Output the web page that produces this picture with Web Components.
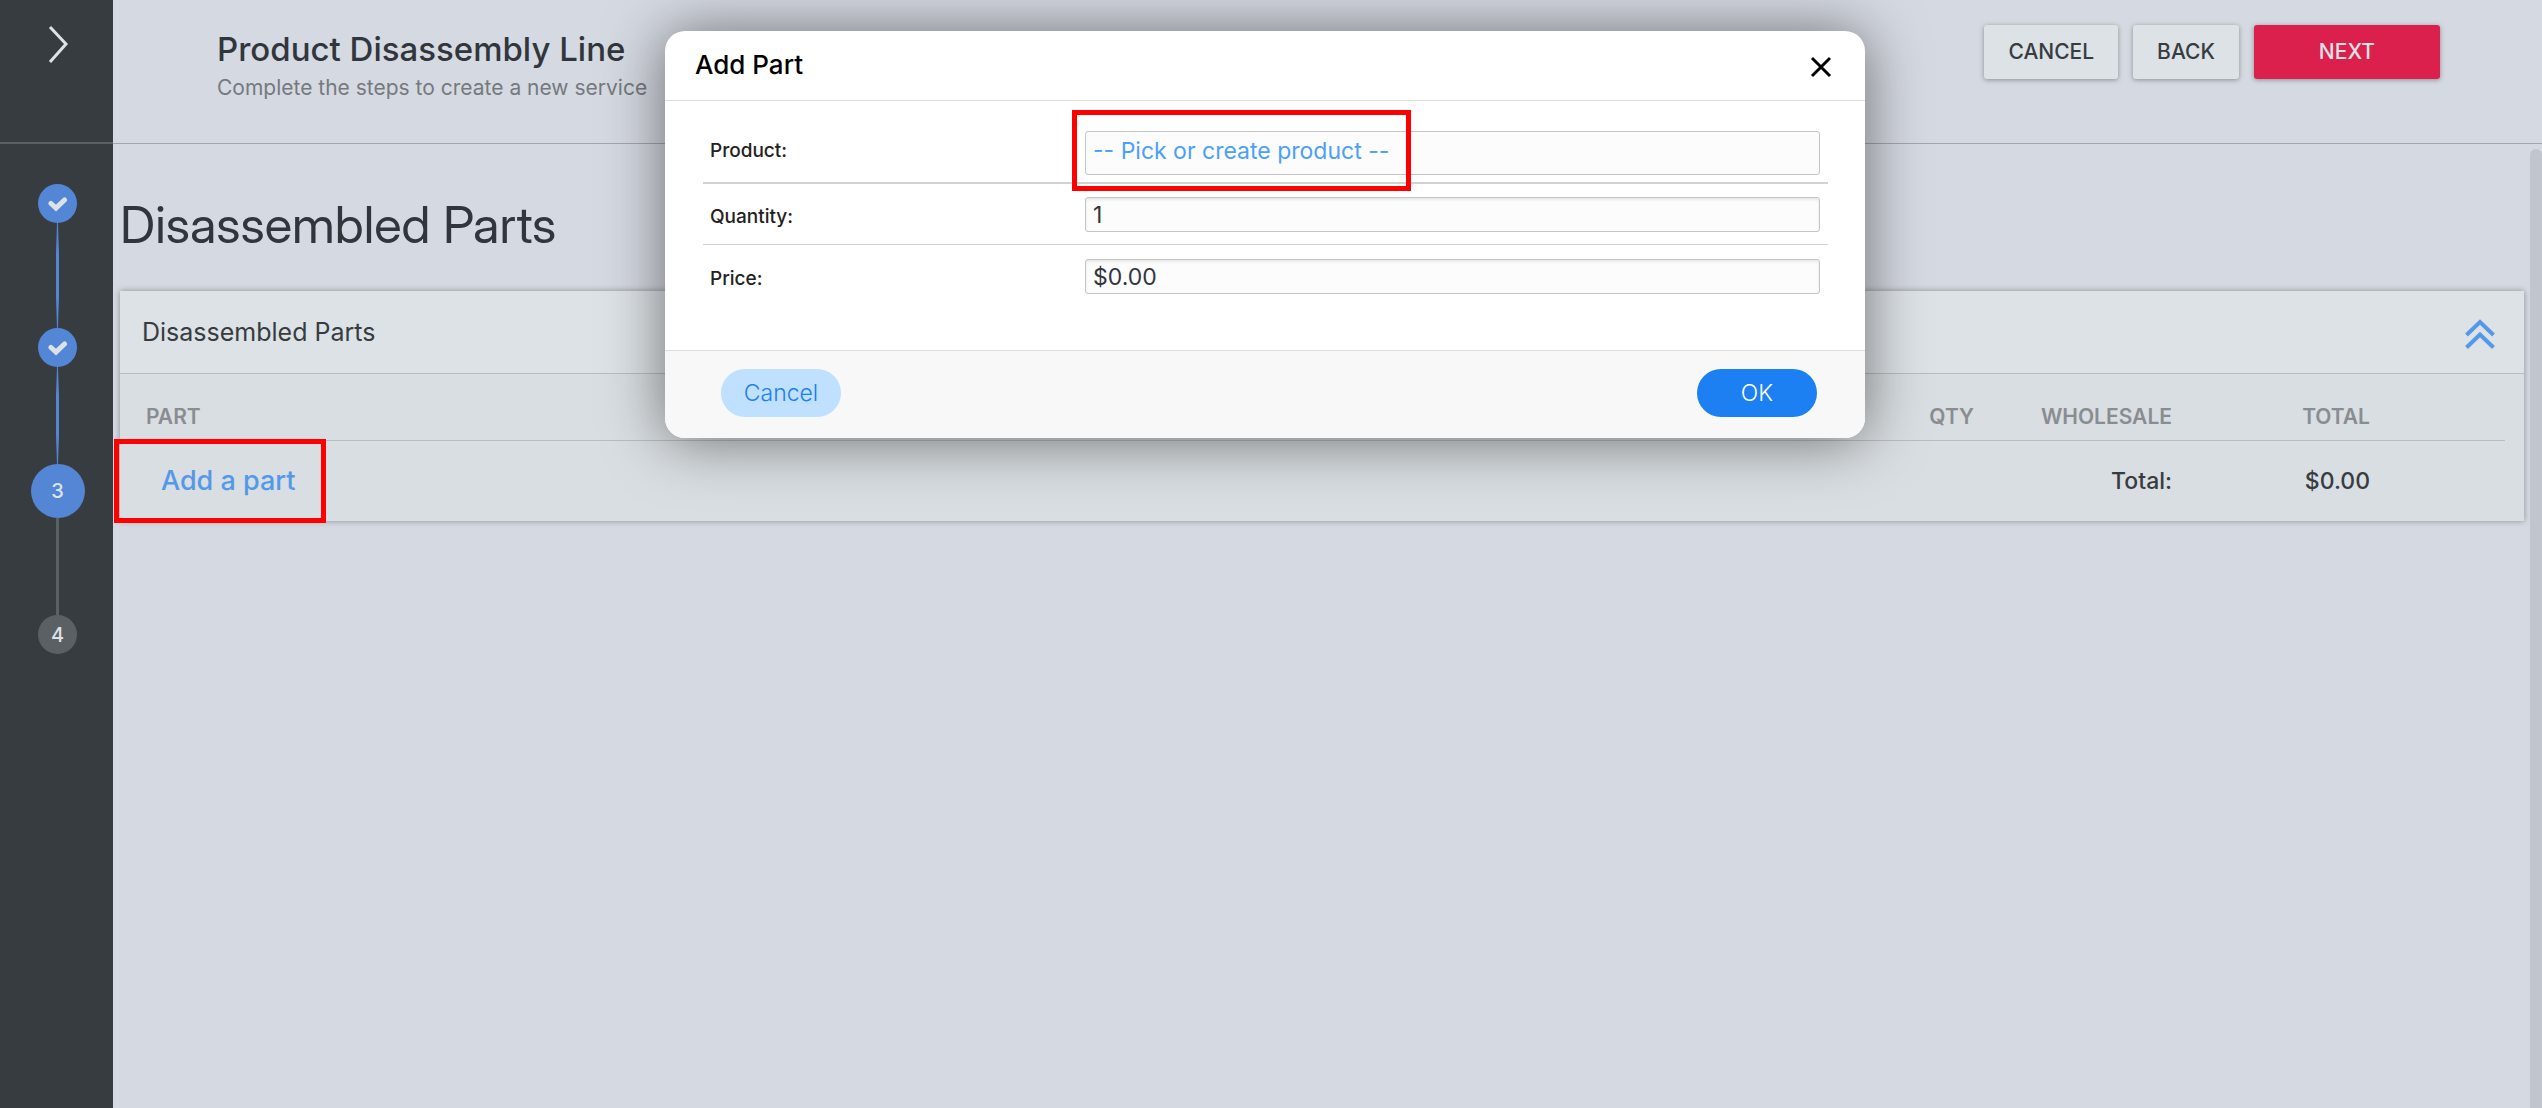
<!DOCTYPE html>
<html lang="en">
<head>
<meta charset="utf-8">
<meta name="viewport" content="width=device-width, initial-scale=1">
<title>Product Disassembly Line</title>
<style>
    html, body {
        margin: 0;
        min-height: 100%;
    }

    body {
        --page: #d5d9e1;
        --ink: #373c40;
        --muted: #898d91;
        --accent: #5486d6;
        --link: #5499e8;
        --panel: #dde2e6;
        --rule: #b8bdc2;
        background: var(--page);
        color: var(--ink);
        font-family: Inter, "Liberation Sans", sans-serif;
        font-size: 23px;
        line-height: 32px;
    }
</style>
</head>
<body>
<wizard-shell>
    <step-rail slot="rail" current="3" total="4"></step-rail>
    <wizard-header slot="header" heading="Product Disassembly Line" hint="Complete the steps to create a new service">
        <wizard-button>CANCEL</wizard-button>
        <wizard-button>BACK</wizard-button>
        <wizard-button primary>NEXT</wizard-button>
    </wizard-header>
    <h1 slot="title">Disassembled Parts</h1>
    <parts-card heading="Disassembled Parts"></parts-card>
    <part-dialog slot="dialog"></part-dialog>
</wizard-shell>

<script>
function attach(element, html) {
    const template = document.createElement('template');
    template.innerHTML = html;
    element.attachShadow({ mode: 'open' });
    element.shadowRoot.appendChild(template.content.cloneNode(true));
}

class WizardShell extends HTMLElement {
    constructor() {
        super();
        attach(this, `
            <style>
                :host {
                    display: flex;
                    position: relative;
                    min-height: 100vh;
                }

                .main {
                    flex: 1;
                    min-width: 0;
                    display: flex;
                    flex-direction: column;
                }

                .scroll-area {
                    flex: 1;
                    display: flex;
                }

                main {
                    flex: 1;
                    min-width: 0;
                    padding: 49px 6px 0 7px;
                }

                ::slotted(h1) {
                    margin: 0 0 34px;
                    font-family: "Inter Display", Inter, "Liberation Sans", sans-serif;
                    font-size: 51px;
                    line-height: 64px;
                    font-weight: 400;
                    color: #31363c;
                }

                .scrollbar {
                    width: 12px;
                    margin-top: 5px;
                    border-radius: 12px 12px 0 0;
                    background: #c1c5cd;
                }

                /* the overlay leaves the scrollbar out, so the dialog centres on the content */
                .overlay {
                    position: absolute;
                    inset: 0 12px 0 0;
                    display: flex;
                    justify-content: center;
                    align-items: flex-start;
                    padding-top: 31px;
                    overflow: hidden;
                    box-sizing: border-box;
                }
            </style>
            <slot name="rail"></slot>
            <div class="main">
                <slot name="header"></slot>
                <div class="scroll-area">
                    <main>
                        <slot name="title"></slot>
                        <slot></slot>
                    </main>
                    <div class="scrollbar"></div>
                </div>
            </div>
            <div class="overlay"><slot name="dialog"></slot></div>
        `);
    }
}

class StepRail extends HTMLElement {
    constructor() {
        super();
        attach(this, `
            <style>
                :host {
                    display: block;
                    flex: none;
                    width: 113px;
                    background: #373c40;
                    color: #dde2e6;
                }

                .top {
                    height: 142px;
                    border-bottom: 2px solid #5b6064;
                }

                .expand {
                    display: block;
                    margin: 0 auto;
                    padding: 24px 0 0;
                    border: 0;
                    background: none;
                    color: inherit;
                }

                svg {
                    display: block;
                }

                ol {
                    list-style: none;
                    margin: 0;
                    padding: 40px 0 0 2px;
                }

                li {
                    display: flex;
                    flex-direction: column;
                    align-items: center;
                }

                .dot {
                    display: flex;
                    align-items: center;
                    justify-content: center;
                    width: 39px;
                    height: 39px;
                    border-radius: 50%;
                    background: #5b6064;
                    font-size: 20px;
                    font-weight: 500;
                }

                .done .dot,
                .current .dot {
                    background: var(--accent);
                }

                .current .dot {
                    width: 54px;
                    height: 54px;
                }

                .line {
                    width: 3px;
                    height: 97px;
                    background: #5b6064;
                }

                .done .line {
                    background: var(--accent);
                    clip-path: polygon(33% 0, 66% 0, 100% 30%, 100% 70%, 66% 100%, 33% 100%, 0 70%, 0 30%);
                }

                li:first-child .line {
                    height: 105px;
                }
            </style>
            <div class="top">
                <button class="expand" type="button" aria-label="Expand menu">
                    <svg width="24" height="40" viewBox="0 0 24 40" fill="none" stroke="currentColor" stroke-width="3">
                        <path d="M5 3L21 20L5 38"></path>
                    </svg>
                </button>
            </div>
            <ol></ol>
        `);
    }

    connectedCallback() {
        const current = Number(this.getAttribute('current'));
        const total = Number(this.getAttribute('total'));
        const check = `
            <svg width="20" height="16" viewBox="0 0 20 16" fill="none" stroke="currentColor" stroke-width="5">
                <path d="M3 7.500L8 12L16.500 4" stroke-linejoin="miter" stroke-linecap="round"></path>
            </svg>
        `;
        let items = '';
        for (let step = 1; step <= total; step++) {
            const state = step < current ? 'done' : step === current ? 'current' : '';
            items += `<li class="${state}"><span class="dot">${step < current ? check : step}</span>`;
            items += step < total ? '<span class="line"></span></li>' : '</li>';
        }
        this.shadowRoot.querySelector('ol').innerHTML = items;
    }
}

class WizardHeader extends HTMLElement {
    constructor() {
        super();
        attach(this, `
            <style>
                :host {
                    display: flex;
                    justify-content: space-between;
                    align-items: flex-start;
                    height: 143px;
                    padding: 0 102px 0 104px;
                    border-bottom: 1px solid #a2a6ad;
                }

                .text {
                    padding-top: 29px;
                }

                h2 {
                    margin: 0;
                    font-size: 33px;
                    line-height: 40px;
                    font-weight: 500;
                    color: #31363c;
                }

                p {
                    margin: 5px 0 0;
                    font-size: 21px;
                    line-height: 28px;
                    color: #75797e;
                }

                .actions {
                    display: flex;
                    gap: 15px;
                    padding-top: 25px;
                }
            </style>
            <div class="text">
                <h2></h2>
                <p></p>
            </div>
            <div class="actions"><slot></slot></div>
        `);
    }

    connectedCallback() {
        this.shadowRoot.querySelector('h2').textContent = this.getAttribute('heading');
        this.shadowRoot.querySelector('p').textContent = this.getAttribute('hint');
    }
}

class WizardButton extends HTMLElement {
    constructor() {
        super();
        attach(this, `
            <style>
                :host {
                    display: block;
                }

                button {
                    display: block;
                    height: 54px;
                    padding: 0 24px;
                    border: 0;
                    border-radius: 3px;
                    background: var(--panel);
                    color: var(--ink);
                    font: 500 21px/28px Inter, "Liberation Sans", sans-serif;
                    box-shadow: 0 1px 5px rgba(0, 0, 0, 0.35);
                }

                :host([primary]) button {
                    padding: 0 65px;
                    background: #db204e;
                    color: #dde2e6;
                }
            </style>
            <button type="button"><slot></slot></button>
        `);
    }
}

class FocusFrame extends HTMLElement {
    constructor() {
        super();
        attach(this, `
            <style>
                :host {
                    display: inline-block;
                    position: relative;
                }

                .frame {
                    position: absolute;
                    inset: var(--frame-inset);
                    border: 5px solid #ff0000;
                    pointer-events: none;
                    z-index: 1;
                }
            </style>
            <slot></slot>
            <div class="frame"></div>
        `);
    }
}

class PartsCard extends HTMLElement {
    constructor() {
        super();
        attach(this, `
            <style>
                :host {
                    display: block;
                    background: #d9dee2;
                    box-shadow: 0 0 6px rgba(0, 0, 0, 0.35);
                }

                header {
                    display: flex;
                    align-items: center;
                    justify-content: space-between;
                    height: 82px;
                    padding: 0 27px 0 22px;
                    background: var(--panel);
                    border-bottom: 1px solid var(--rule);
                }

                h2 {
                    margin: 0;
                    font-size: 25px;
                    font-weight: 400;
                }

                .collapse {
                    padding: 4px 0 0;
                    border: 0;
                    background: none;
                    color: var(--link);
                }

                svg {
                    display: block;
                }

                .body {
                    padding: 0 19px;
                }

                table {
                    width: 100%;
                    table-layout: fixed;
                    border-collapse: collapse;
                }

                .number {
                    width: 198px;
                }

                .tail {
                    width: 135px;
                }

                th {
                    padding: 26px 0 6px;
                    border-bottom: 1px solid var(--rule);
                    font-size: 21px;
                    line-height: 34px;
                    font-weight: 600;
                    color: var(--muted);
                    text-align: right;
                }

                th:first-child {
                    padding-left: 7px;
                    text-align: left;
                }

                td {
                    height: 80px;
                    padding: 0;
                    font-weight: 500;
                    text-align: right;
                }

                td:first-child {
                    padding-left: 22px;
                    text-align: left;
                }

                focus-frame {
                    --frame-inset: -26px -31px -25px -47px;
                    vertical-align: middle;
                }

                a {
                    color: var(--link);
                    font-size: 27px;
                    text-decoration: none;
                }
            </style>
            <header>
                <h2></h2>
                <button class="collapse" type="button" aria-label="Collapse section">
                    <svg width="34" height="34" viewBox="0 0 34 34" fill="none" stroke="currentColor" stroke-width="4">
                        <path d="M3.500 18L17 5L30.500 18M3.500 30.500L17 17.500L30.500 30.500"></path>
                    </svg>
                </button>
            </header>
            <div class="body">
                <table>
                    <colgroup>
                        <col>
                        <col class="number">
                        <col class="number">
                        <col class="number">
                        <col class="tail">
                    </colgroup>
                    <thead>
                        <tr>
                            <th scope="col">PART</th>
                            <th scope="col">QTY</th>
                            <th scope="col">WHOLESALE</th>
                            <th scope="col">TOTAL</th>
                            <th></th>
                        </tr>
                    </thead>
                    <tbody>
                        <tr>
                            <td><focus-frame><a href="#add-part">Add a part</a></focus-frame></td>
                            <td></td>
                            <td>Total:</td>
                            <td>$0.00</td>
                            <td></td>
                        </tr>
                    </tbody>
                </table>
            </div>
        `);
    }

    connectedCallback() {
        this.shadowRoot.querySelector('h2').textContent = this.getAttribute('heading');
    }
}

class FormRow extends HTMLElement {
    constructor() {
        super();
        attach(this, `
            <style>
                :host {
                    display: grid;
                    grid-template-columns: 1fr 2fr;
                    align-items: center;
                    padding: 13px 0 12px;
                    border-bottom: 1px solid #d2d2d2;
                }

                :host(:first-child) {
                    padding: 30px 0 7px;
                    border-bottom-width: 2px;
                }

                :host(:last-child) {
                    padding-top: 14px;
                    border-bottom: 0;
                }

                .label {
                    padding: 5px 7px 0;
                }

                :host(:first-child) .label {
                    padding: 0 7px 5px;
                }

                .control {
                    padding: 0 8px 0 7px;
                }
            </style>
            <div class="label"><slot name="label"></slot></div>
            <div class="control"><slot></slot></div>
        `);
    }
}

class PartDialog extends HTMLElement {
    constructor() {
        super();
        attach(this, `
            <style>
                :host {
                    display: block;
                    width: 1200px;
                    max-width: 100%;
                    border-radius: 20px;
                    background: #fff;
                    box-shadow: 0 2px 60px rgba(0, 0, 0, 0.5);
                }

                header {
                    display: flex;
                    align-items: center;
                    justify-content: space-between;
                    height: 69px;
                    padding: 0 33px 0 30px;
                    border-bottom: 1px solid #dedede;
                    color: #000;
                }

                h2 {
                    margin: 0;
                    padding-bottom: 2px;
                    font-size: 26px;
                    font-weight: 500;
                }

                .close {
                    padding: 2px 0 0;
                    border: 0;
                    background: none;
                    color: #000;
                }

                svg {
                    display: block;
                }

                form {
                    padding: 0 37px 44px 38px;
                }

                label {
                    display: block;
                    font-size: 19px;
                    line-height: 26px;
                    font-weight: 500;
                    color: #222;
                }

                input,
                .field {
                    display: block;
                    box-sizing: border-box;
                    width: 100%;
                    height: 35px;
                    padding: 0 7px;
                    border: 1px solid #c4c4c4;
                    border-radius: 3px;
                    background: #fcfcfc;
                    color: #31363c;
                    font: 400 23px/32px Inter, "Liberation Sans", sans-serif;
                }

                input {
                    box-shadow: inset 0 2px 3px rgba(0, 0, 0, 0.08);
                }

                .field {
                    height: 44px;
                    padding-top: 3px;
                }

                .pick {
                    display: block;
                    padding: 0;
                    border: 0;
                    background: none;
                    color: #4ba0fb;
                    font: inherit;
                }

                focus-frame {
                    --frame-inset: -25px -22px -24px -21px;
                }

                footer {
                    display: flex;
                    justify-content: space-between;
                    padding: 18px 48px 21px 56px;
                    border-top: 1px solid #dedede;
                    border-radius: 0 0 20px 20px;
                    background: #f8f8f8;
                }

                footer button {
                    width: 120px;
                    height: 48px;
                    padding: 0;
                    border: 0;
                    border-radius: 24px;
                    background: #bfe0fe;
                    color: #1c7ff2;
                    font: 300 23px/32px Inter, "Liberation Sans", sans-serif;
                }

                footer .ok {
                    background: #1c7ff2;
                    color: #fff;
                }
            </style>
            <header>
                <h2>Add Part</h2>
                <button class="close" type="button" aria-label="Close">
                    <svg width="22" height="22" viewBox="0 0 22 22" fill="none" stroke="currentColor" stroke-width="3">
                        <path d="M2 2L20 20M20 2L2 20"></path>
                    </svg>
                </button>
            </header>
            <form id="part-form">
                <form-row>
                    <label slot="label" for="product">Product:</label>
                    <div class="field">
                        <focus-frame><button class="pick" id="product" type="button">-- Pick or create product --</button></focus-frame>
                    </div>
                </form-row>
                <form-row>
                    <label slot="label" for="quantity">Quantity:</label>
                    <input id="quantity" type="text" inputmode="numeric" value="1">
                </form-row>
                <form-row>
                    <label slot="label" for="price">Price:</label>
                    <input id="price" type="text" inputmode="decimal" value="$0.00">
                </form-row>
            </form>
            <footer>
                <button type="button">Cancel</button>
                <button class="ok" type="button">OK</button>
            </footer>
        `);
        this.setAttribute('role', 'dialog');
        this.setAttribute('aria-label', 'Add Part');
    }
}

customElements.define('wizard-shell', WizardShell);
customElements.define('step-rail', StepRail);
customElements.define('wizard-header', WizardHeader);
customElements.define('wizard-button', WizardButton);
customElements.define('focus-frame', FocusFrame);
customElements.define('parts-card', PartsCard);
customElements.define('form-row', FormRow);
customElements.define('part-dialog', PartDialog);
</script>
</body>
</html>
